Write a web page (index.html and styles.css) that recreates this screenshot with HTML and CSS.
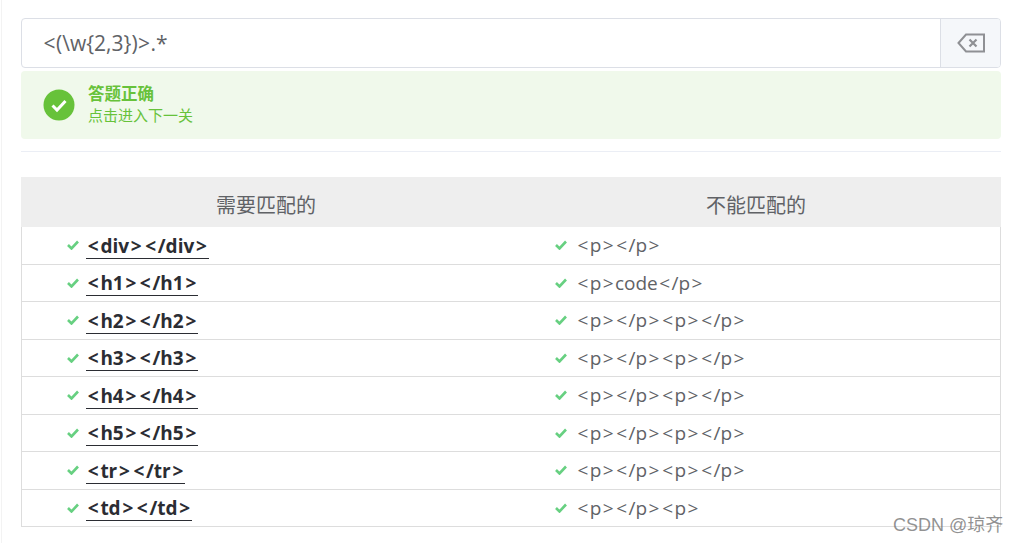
FILE: index.html
```html
<!DOCTYPE html>
<html lang="zh">
<head>
<meta charset="utf-8">
<title>答题正确</title>
<link rel="stylesheet" href="styles.css">
</head>
<body>
<main class="page">
  <div class="input-group">
    <div class="input-text"><i class="ang">&lt;</i>(\w{2,3})<i class="ang">&gt;</i>.*</div>
    <button class="clear-btn" aria-label="clear">
      <svg width="28" height="20" viewBox="0 0 28 20"><path d="M1.500 10 9 1.500H27V18.500H9Z" fill="none" stroke="#8f9094" stroke-width="2"/><path d="M12.500 6.500 19.500 13.500M19.500 6.500 12.500 13.500" fill="none" stroke="#8f9094" stroke-width="2.200"/></svg>
    </button>
  </div>
  <div class="alert">
    <svg class="alert-icon" width="32" height="32" viewBox="0 0 32 32"><circle cx="16" cy="16" r="15.500" fill="#67c23a"/><path d="M9.500 16.500 14 21 22.500 12" fill="none" stroke="#fff" stroke-width="3"/></svg>
    <div class="alert-body">
      <div class="alert-title">答题正确</div>
      <div class="alert-desc">点击进入下一关</div>
    </div>
  </div>
  <hr class="divider">
  <section class="table">
    <div class="thead"><div class="th">需要匹配的</div><div class="th">不能匹配的</div></div>
    <div class="row"><div class="cell"><svg class="tick" viewBox="0 0 12 10"><path d="M1 5 4.500 8.500 11 1.500"/></svg><span class="match"><i class="ang">&lt;</i>div<i class="ang">&gt;</i><i class="ang">&lt;</i>/div<i class="ang">&gt;</i></span></div><div class="cell"><svg class="tick" viewBox="0 0 12 10"><path d="M1 5 4.500 8.500 11 1.500"/></svg><span class="nomatch"><i class="ang">&lt;</i>p<i class="ang">&gt;</i><i class="ang">&lt;</i>/p<i class="ang">&gt;</i></span></div></div>
    <div class="row"><div class="cell"><svg class="tick" viewBox="0 0 12 10"><path d="M1 5 4.500 8.500 11 1.500"/></svg><span class="match"><i class="ang">&lt;</i>h1<i class="ang">&gt;</i><i class="ang">&lt;</i>/h1<i class="ang">&gt;</i></span></div><div class="cell"><svg class="tick" viewBox="0 0 12 10"><path d="M1 5 4.500 8.500 11 1.500"/></svg><span class="nomatch"><i class="ang">&lt;</i>p<i class="ang">&gt;</i>code<i class="ang">&lt;</i>/p<i class="ang">&gt;</i></span></div></div>
    <div class="row"><div class="cell"><svg class="tick" viewBox="0 0 12 10"><path d="M1 5 4.500 8.500 11 1.500"/></svg><span class="match"><i class="ang">&lt;</i>h2<i class="ang">&gt;</i><i class="ang">&lt;</i>/h2<i class="ang">&gt;</i></span></div><div class="cell"><svg class="tick" viewBox="0 0 12 10"><path d="M1 5 4.500 8.500 11 1.500"/></svg><span class="nomatch"><i class="ang">&lt;</i>p<i class="ang">&gt;</i><i class="ang">&lt;</i>/p<i class="ang">&gt;</i><i class="ang">&lt;</i>p<i class="ang">&gt;</i><i class="ang">&lt;</i>/p<i class="ang">&gt;</i></span></div></div>
    <div class="row"><div class="cell"><svg class="tick" viewBox="0 0 12 10"><path d="M1 5 4.500 8.500 11 1.500"/></svg><span class="match"><i class="ang">&lt;</i>h3<i class="ang">&gt;</i><i class="ang">&lt;</i>/h3<i class="ang">&gt;</i></span></div><div class="cell"><svg class="tick" viewBox="0 0 12 10"><path d="M1 5 4.500 8.500 11 1.500"/></svg><span class="nomatch"><i class="ang">&lt;</i>p<i class="ang">&gt;</i><i class="ang">&lt;</i>/p<i class="ang">&gt;</i><i class="ang">&lt;</i>p<i class="ang">&gt;</i><i class="ang">&lt;</i>/p<i class="ang">&gt;</i></span></div></div>
    <div class="row"><div class="cell"><svg class="tick" viewBox="0 0 12 10"><path d="M1 5 4.500 8.500 11 1.500"/></svg><span class="match"><i class="ang">&lt;</i>h4<i class="ang">&gt;</i><i class="ang">&lt;</i>/h4<i class="ang">&gt;</i></span></div><div class="cell"><svg class="tick" viewBox="0 0 12 10"><path d="M1 5 4.500 8.500 11 1.500"/></svg><span class="nomatch"><i class="ang">&lt;</i>p<i class="ang">&gt;</i><i class="ang">&lt;</i>/p<i class="ang">&gt;</i><i class="ang">&lt;</i>p<i class="ang">&gt;</i><i class="ang">&lt;</i>/p<i class="ang">&gt;</i></span></div></div>
    <div class="row"><div class="cell"><svg class="tick" viewBox="0 0 12 10"><path d="M1 5 4.500 8.500 11 1.500"/></svg><span class="match"><i class="ang">&lt;</i>h5<i class="ang">&gt;</i><i class="ang">&lt;</i>/h5<i class="ang">&gt;</i></span></div><div class="cell"><svg class="tick" viewBox="0 0 12 10"><path d="M1 5 4.500 8.500 11 1.500"/></svg><span class="nomatch"><i class="ang">&lt;</i>p<i class="ang">&gt;</i><i class="ang">&lt;</i>/p<i class="ang">&gt;</i><i class="ang">&lt;</i>p<i class="ang">&gt;</i><i class="ang">&lt;</i>/p<i class="ang">&gt;</i></span></div></div>
    <div class="row"><div class="cell"><svg class="tick" viewBox="0 0 12 10"><path d="M1 5 4.500 8.500 11 1.500"/></svg><span class="match"><i class="ang">&lt;</i>tr<i class="ang">&gt;</i><i class="ang">&lt;</i>/tr<i class="ang">&gt;</i></span></div><div class="cell"><svg class="tick" viewBox="0 0 12 10"><path d="M1 5 4.500 8.500 11 1.500"/></svg><span class="nomatch"><i class="ang">&lt;</i>p<i class="ang">&gt;</i><i class="ang">&lt;</i>/p<i class="ang">&gt;</i><i class="ang">&lt;</i>p<i class="ang">&gt;</i><i class="ang">&lt;</i>/p<i class="ang">&gt;</i></span></div></div>
    <div class="row"><div class="cell"><svg class="tick" viewBox="0 0 12 10"><path d="M1 5 4.500 8.500 11 1.500"/></svg><span class="match"><i class="ang">&lt;</i>td<i class="ang">&gt;</i><i class="ang">&lt;</i>/td<i class="ang">&gt;</i></span></div><div class="cell"><svg class="tick" viewBox="0 0 12 10"><path d="M1 5 4.500 8.500 11 1.500"/></svg><span class="nomatch"><i class="ang">&lt;</i>p<i class="ang">&gt;</i><i class="ang">&lt;</i>/p<i class="ang">&gt;</i><i class="ang">&lt;</i>p<i class="ang">&gt;</i></span></div></div>
  </section>
</main>
<div class="watermark">CSDN @琼齐</div>
</body>
</html>
```
FILE: styles.css
```css
* { box-sizing: border-box; }
html, body { margin: 0; height: 543px; overflow: hidden; background: #fff; }
body { font-family: "Open Sans", "Noto Sans CJK SC", sans-serif; color: #606266; position: relative; }
.page { margin-left: 1px; height: 543px; border-left: 1px solid #f3f3f3; padding: 18px 19px 0 19px; }
.ang { font-style: normal; padding: 0 1.4px; }
.input-group { display: flex; height: 50px; border: 1px solid #dcdfe6; border-radius: 4px; }
.input-text { flex: 1; padding-left: 21px; font-size: 21px; line-height: 49px; color: #606266; }
.input-text .ang { padding: 0 .5px; }
.clear-btn { width: 60px; padding: 0; border: 0; border-left: 1px solid #dcdfe6; border-radius: 0 3px 3px 0; background: #f5f7fa; display: flex; align-items: center; justify-content: center; }
.alert { display: flex; align-items: center; margin-top: 3px; height: 68px; padding-left: 22px; background: #f0f9eb; border-radius: 4px; color: #67c23a; }
.alert-icon { display: block; flex: none; }
.alert-body { margin-left: 13px; margin-top: -2px; }
.alert-title { font-size: 16.5px; line-height: 22px; font-weight: 700; }
.alert-desc { font-size: 15px; line-height: 21px; }
.divider { margin: 12px 0 25px; border: 0; border-top: 1px solid #ebeef5; }
.table { display: block; }
.thead { display: grid; grid-template-columns: 1fr 1fr; height: 50px; background: #eee; }
.th { font-size: 20px; line-height: 58px; text-align: center; color: #606266; }
.row { display: grid; grid-template-columns: 1fr 1fr; height: 37.5px; border: 1px solid #ddd; border-top: 0; }
.cell { display: flex; align-items: center; padding-left: 45px; font-size: 19px; }
.cell + .cell { padding-left: 44px; }
.tick { width: 12px; height: 10px; flex: none; margin-right: 8px; fill: none; stroke: #67d081; stroke-width: 2.6; }
.match { margin-left: -1px; font-weight: 700; color: #2b2d33; border-bottom: 1px solid #2b2d33; line-height: 26px; height: 26px; margin-top: 1px; }
.match .ang { padding: 0 1.75px; }
.nomatch { color: #606266; margin-left: 1px; }
.watermark { position: absolute; left: 893px; top: 513px; font-family: "Liberation Sans", "Noto Sans CJK SC", sans-serif; font-size: 18px; line-height: 24px; color: rgba(110,110,110,.75); }
```
